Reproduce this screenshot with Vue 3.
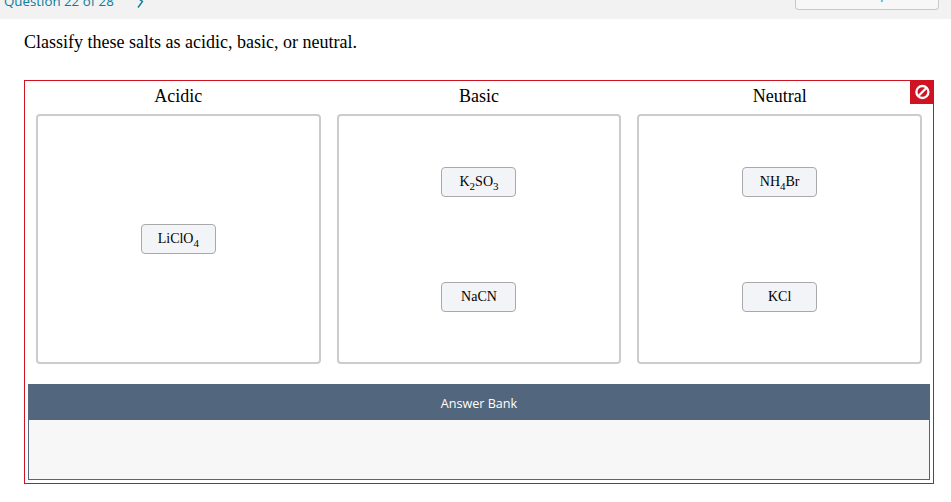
<script setup>
const zones = [
  { name: 'Acidic', chips: [[['LiClO'], ['4', true]]] },
  { name: 'Basic', chips: [[['K'], ['2', true], ['SO'], ['3', true]], [['NaCN']]] },
  { name: 'Neutral', chips: [[['NH'], ['4', true], ['Br']], [['KCl']]] },
]
</script>

<template>
  <div class="page">
    <header class="topbar">
      <div class="nav">
        <span class="question">Question 22 of 28</span>
        <svg class="chevron" width="10" height="10" viewBox="0 0 10 10" aria-hidden="true">
          <path d="M2.5 -2 L7.5 1.5 L3 7.5" fill="none" stroke="#0a7c9c" stroke-width="1.4" />
        </svg>
      </div>
      <div class="attempt"><span>Attempt</span></div>
    </header>

    <main class="content">
      <p class="prompt">Classify these salts as acidic, basic, or neutral.</p>

      <section class="board">
        <div class="badge">
          <svg width="16" height="16" viewBox="0 0 16 16" aria-hidden="true">
            <circle cx="8.4" cy="8" r="6" fill="none" stroke="#fff" stroke-width="2.3" />
            <path d="M4.4 12 L12.4 4" stroke="#fff" stroke-width="2.3" />
          </svg>
        </div>

        <div class="zones">
          <div v-for="zone in zones" :key="zone.name" class="column">
            <h2 class="zone-title">{{ zone.name }}</h2>
            <div class="zone">
              <div v-for="(chip, i) in zone.chips" :key="i" class="chip">
                <span class="chip-text"><template v-for="(part, j) in chip" :key="j"><sub v-if="part[1]">{{ part[0] }}</sub><template v-else>{{ part[0] }}</template></template></span>
              </div>
            </div>
          </div>
        </div>

        <div class="bank">
          <div class="bank-head"><span class="bank-label">Answer Bank</span></div>
          <div class="bank-body"></div>
        </div>
      </section>
    </main>
  </div>
</template>

<style>
html, body { margin: 0; background: #fff; }
</style>

<style scoped>
.page {
  width: 951px;
  height: 502px;
  overflow: hidden;
  background: #fff;
  font-family: "Liberation Serif", serif;
  color: #000;
}
.topbar {
  height: 19px;
  background: #f2f2f2;
  display: flex;
  justify-content: space-between;
  overflow: hidden;
  padding: 0 12px 0 4px;
}
.nav {
  display: flex;
  align-items: flex-start;
  height: 19px;
}
.question {
  font-family: "Open Sans", sans-serif;
  font-size: 13.3px;
  line-height: 19px;
  color: #0a7c9c;
  margin-top: -8px;
  width: 131px;
  white-space: nowrap;
}
.chevron { display: block; overflow: visible; }
.attempt {
  width: 144px;
  height: 10px;
  box-sizing: border-box;
  background: #f7f7f7;
  border: 1px solid #c8c8c8;
  border-top: 0;
  border-radius: 0 0 4px 4px;
  overflow: hidden;
  text-align: center;
}
.attempt span {
  display: block;
  font-family: "Open Sans", sans-serif;
  font-size: 14px;
  line-height: 19px;
  color: #0a9bc0;
  margin-top: -17px;
}
.content { padding: 0 17px 0 24px; }
.prompt {
  margin: 0;
  padding-top: 13px;
  height: 48px;
  box-sizing: border-box;
  font-size: 18px;
  line-height: 20px;
}
.board {
  position: relative;
  width: 910px;
  margin-top: 13px;
  box-sizing: border-box;
  border: 1px solid #cf1322;
  padding-bottom: 3px;
}
.badge {
  position: absolute;
  top: -1px;
  right: -1px;
  width: 24px;
  height: 24px;
  background: #cf1322;
  display: flex;
  align-items: center;
  justify-content: center;
}
.zones {
  display: grid;
  grid-template-columns: repeat(3, 1fr);
  gap: 16px;
  padding: 0 11px;
}
.zone-title {
  margin: 0;
  height: 33px;
  font-size: 18px;
  font-weight: 400;
  line-height: 31px;
  text-align: center;
}
.zone {
  height: 250px;
  box-sizing: border-box;
  border: 2px solid #ccc;
  border-radius: 4px;
  display: flex;
  flex-direction: column;
  align-items: center;
  justify-content: center;
  gap: 85px;
}
.chip {
  width: 75px;
  height: 30px;
  box-sizing: border-box;
  background: #f3f4f8;
  border: 1px solid #a9a9a9;
  border-radius: 4px;
  display: flex;
  align-items: center;
  justify-content: center;
}
.chip-text {
  font-size: 14px;
  line-height: 16px;
  white-space: nowrap;
}
.chip-text sub {
  font-size: 11px;
  line-height: 0;
  vertical-align: -4px;
}
.bank {
  margin: 20px 3px 0;
}
.bank-head {
  height: 36px;
  box-sizing: border-box;
  padding-top: 4px;
  background: #52667d;
  display: flex;
  align-items: center;
  justify-content: center;
}
.bank-label {
  font-family: "Open Sans", sans-serif;
  font-size: 12.6px;
  line-height: 18px;
  color: #fff;
}
.bank-body {
  height: 60px;
  box-sizing: border-box;
  background: #f7f7f7;
  border: 1px solid #52667d;
  border-top: 0;
}
</style>
